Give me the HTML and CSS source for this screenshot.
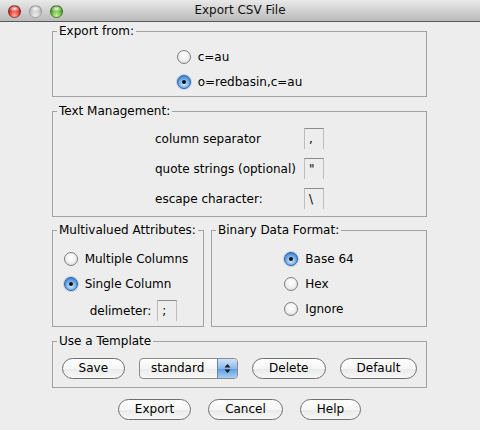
FILE: index.html
```html
<!DOCTYPE html>
<html>
<head>
<meta charset="utf-8">
<link rel="stylesheet" href="styles.css">
</head>
<body>
<div class="window">
  <div class="titlebar">
    <div class="lights">
      <span class="light red"></span>
      <span class="light grey"></span>
      <span class="light green"></span>
    </div>
    <div class="title">Export CSV File</div>
  </div>
  <div class="content">
    <fieldset class="panel p-export">
      <legend>Export from:</legend>
      <div class="center">
        <div class="group rows25">
          <div class="row"><span class="radio"></span><span>c=au</span></div>
          <div class="row"><span class="radio on"></span><span>o=redbasin,c=au</span></div>
        </div>
      </div>
    </fieldset>

    <fieldset class="panel p-text">
      <legend>Text Management:</legend>
      <div class="center">
        <div class="tgrid">
          <span>column separator</span><span class="field">,</span>
          <span>quote strings (optional)</span><span class="field">"</span>
          <span>escape character:</span><span class="field">\</span>
        </div>
      </div>
    </fieldset>

    <div class="pair">
      <fieldset class="panel p-multi">
        <legend>Multivalued Attributes:</legend>
        <div class="center">
          <div class="group rows25">
            <div class="row"><span class="radio"></span><span>Multiple Columns</span></div>
            <div class="row"><span class="radio on"></span><span>Single Column</span></div>
            <div class="row delim"><span>delimeter:</span><span class="field">;</span></div>
          </div>
        </div>
      </fieldset>
      <fieldset class="panel p-binary">
        <legend>Binary Data Format:</legend>
        <div class="center">
          <div class="group rows25">
            <div class="row"><span class="radio on"></span><span>Base 64</span></div>
            <div class="row"><span class="radio"></span><span>Hex</span></div>
            <div class="row"><span class="radio"></span><span>Ignore</span></div>
          </div>
        </div>
      </fieldset>
    </div>

    <fieldset class="panel p-template">
      <legend>Use a Template</legend>
      <div class="btnrow tmpl">
        <span class="btn">Save</span>
        <span class="popup"><span class="popup-text">standard</span><span class="stepper"><svg width="7" height="11" viewBox="0 0 7 11"><path d="M3.5 1 L6.5 4.5 L0.5 4.5 Z" fill="#1a1a1a"/><path d="M3.5 10 L6.5 6.5 L0.5 6.5 Z" fill="#1a1a1a"/></svg></span></span>
        <span class="btn">Delete</span>
        <span class="btn">Default</span>
      </div>
    </fieldset>

    <div class="btnrow bottom">
      <span class="btn">Export</span>
      <span class="btn">Cancel</span>
      <span class="btn">Help</span>
    </div>
  </div>
</div>
</body>
</html>
```
FILE: styles.css
```css
html, body {
  margin: 0;
  padding: 0;
}
body {
  width: 480px;
  height: 430px;
  overflow: hidden;
  background: #ededed;
  font-family: "DejaVu Sans", "Liberation Sans", sans-serif;
  font-size: 12px;
  color: #000;
}
.window {
  width: 480px;
  height: 430px;
  background: #ededed;
}
.titlebar {
  height: 21px;
  border-bottom: 1px solid #5a5a5a;
  background: linear-gradient(#e9e9e9, #bababa);
  display: flex;
  align-items: center;
  position: relative;
}
.lights {
  display: flex;
  gap: 8px;
  padding-left: 8px;
  padding-top: 1px;
}
.light {
  width: 13px;
  height: 13px;
  border-radius: 50%;
  box-sizing: border-box;
  border: 1px solid rgba(0,0,0,0.35);
}
.light.red {
  background:
    radial-gradient(ellipse 55% 32% at 50% 24%, rgba(255,255,255,0.9), rgba(255,255,255,0) 100%),
    radial-gradient(circle at 50% 85%, #ffb0a0 0%, #e2352b 50%, #9a0c07 100%);
}
.light.grey {
  background:
    radial-gradient(ellipse 55% 32% at 50% 24%, rgba(255,255,255,0.9), rgba(255,255,255,0) 100%),
    radial-gradient(circle at 50% 85%, #eeeeee 0%, #c6c6c6 50%, #9a9a9a 100%);
  border-color: rgba(0,0,0,0.2);
}
.light.green {
  background:
    radial-gradient(ellipse 55% 32% at 50% 24%, rgba(255,255,255,0.9), rgba(255,255,255,0) 100%),
    radial-gradient(circle at 50% 85%, #c8f5a0 0%, #5cb531 50%, #2a7410 100%);
}
.title {
  position: absolute;
  left: 0;
  right: 0;
  top: 0;
  height: 21px;
  line-height: 21px;
  text-align: center;
  font-size: 12px;
  color: #111;
}
.content {
  padding: 0 53px 0 52px;
}
.panel {
  box-sizing: border-box;
  margin: 0;
  padding: 0;
  border: 1px solid #a2a2a2;
  min-width: 0;
}
.panel legend {
  margin-left: 4px;
  padding: 0 2px;
  height: 15px;
  line-height: 15px;
  font-size: 12px;
}
.center {
  display: flex;
  justify-content: center;
}
.group {
  display: flex;
  flex-direction: column;
}
.rows25 .row {
  height: 25px;
  display: flex;
  align-items: center;
  gap: 7px;
}
.radio {
  width: 14px;
  height: 14px;
  box-sizing: border-box;
  border-radius: 50%;
  border: 1px solid #7e7e7e;
  background: radial-gradient(circle at 50% 40%, #ffffff 0%, #f4f4f4 45%, #cfcfcf 100%);
  position: relative;
  flex: none;
}
.radio.on {
  border-color: #2f5f9e;
  background: radial-gradient(circle at 50% 65%, #d6ecff 0%, #79b2ea 45%, #3f7fcf 80%, #2d63ac 100%);
  box-shadow: 0 0 0 1px rgba(110,160,220,0.35);
}
.radio.on::after {
  content: "";
  position: absolute;
  left: 4px;
  top: 4px;
  width: 4px;
  height: 4px;
  border-radius: 50%;
  background: #111;
}
.field {
  width: 20px;
  height: 21px;
  box-sizing: border-box;
  border-top: 1px solid #8c8c8c;
  border-left: 1px solid #bdbdbd;
  border-right: 1px solid #bdbdbd;
  padding-left: 4px;
  line-height: 20px;
  font-size: 12px;
  display: inline-block;
}

.p-export {
  margin-top: 2px;
  height: 73px;
}
.p-export .center {
  padding-top: 5px;
}

.p-text {
  margin-top: 7px;
  height: 113px;
}
.tgrid {
  padding-top: 5px;
  display: grid;
  grid-template-columns: auto 20px;
  grid-auto-rows: 30px;
  column-gap: 8px;
  align-items: center;
}
.tgrid .field {
  margin-top: -1px;
}

.pair {
  margin-top: 6px;
  display: flex;
  gap: 7px;
}
.p-multi {
  width: 152px;
  height: 104px;
  flex: none;
}
.p-binary {
  width: 216px;
  height: 104px;
  flex: none;
}
.p-multi .group,
.p-binary .group {
  padding-top: 8px;
}
.p-multi .group {
  margin-left: -4px;
}
.row.delim {
  margin-left: 26px;
  gap: 6px;
  margin-top: 2px;
}

.p-template {
  margin-top: 7px;
  height: 54px;
}
.btnrow {
  display: flex;
  justify-content: center;
  align-items: center;
}
.tmpl {
  gap: 14px;
  padding-top: 9px;
}
.btn {
  height: 21px;
  box-sizing: border-box;
  border: 1px solid #6f6f6f;
  border-radius: 11px;
  padding: 0 16px;
  line-height: 19px;
  background: linear-gradient(#ffffff 0%, #f6f6f6 50%, #e9e9e9 51%, #f7f7f7 100%);
  font-size: 12px;
  display: inline-flex;
  align-items: center;
}
.popup {
  width: 99px;
  height: 21px;
  box-sizing: border-box;
  border: 1px solid #8a8a8a;
  border-radius: 4px;
  background: linear-gradient(#ffffff 0%, #f4f4f4 50%, #ebebeb 51%, #f7f7f7 100%);
  display: flex;
  overflow: hidden;
}
.popup-text {
  flex: 1;
  padding-left: 11px;
  line-height: 19px;
}
.stepper {
  width: 19px;
  border-left: 1px solid #6a86ad;
  background: linear-gradient(#cfe3f8 0%, #8ab9ec 50%, #5c9ae0 51%, #a9d0f5 100%);
  display: flex;
  align-items: center;
  justify-content: center;
}
.bottom {
  margin-top: 11px;
  gap: 17px;
}
```
